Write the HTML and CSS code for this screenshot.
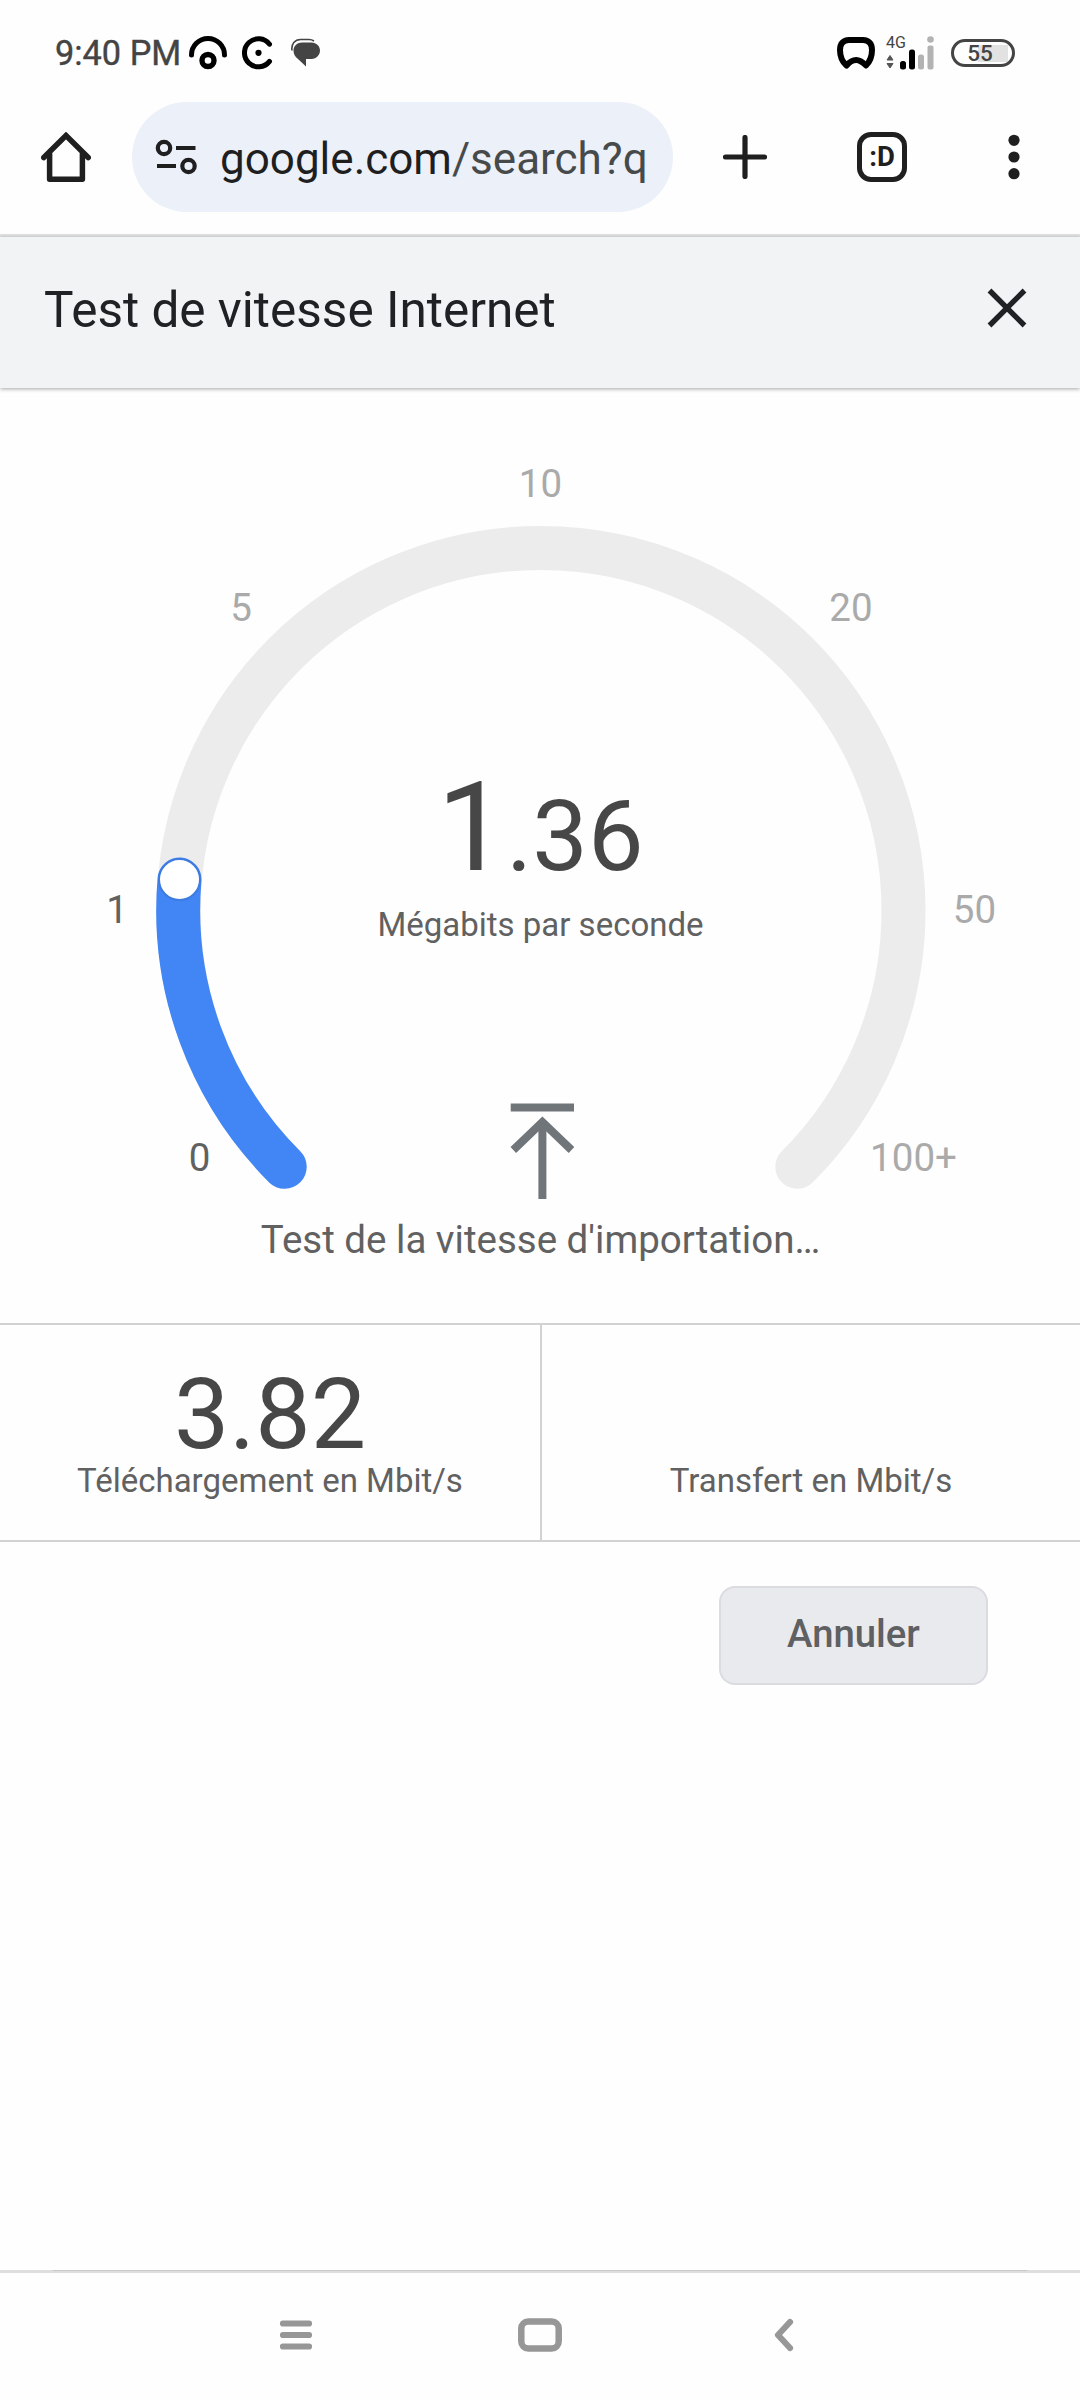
FILE: index.html
```html
<!DOCTYPE html>
<html lang="fr">
<head>
    <meta charset="UTF-8">
    <meta name="viewport" content="width=device-width, initial-scale=1.0">
    <title>Test de vitesse Internet</title>
    <link rel="stylesheet" href="styles.css">
</head>
<body>
    <div class="status-bar">
        <span class="time">9:40 PM</span>
        <svg class="icon-arc" width="40" height="34" viewBox="0 0 40 34">
            <path d="M3.5 19a16.5 16.5 0 0 1 33 0" fill="none" stroke="#000" stroke-width="5" stroke-linecap="round"/>
            <circle cx="20" cy="24.5" r="6" fill="none" stroke="#000" stroke-width="5.4"/>
        </svg>
        <svg class="icon-c" width="32" height="34" viewBox="0 0 32 34">
            <path d="M27.5 8.2a14 14 0 1 0 0 17.2" fill="none" stroke="#000" stroke-width="5" stroke-linecap="round"/>
            <circle cx="16.5" cy="16.8" r="3.1"/>
        </svg>
        <svg class="icon-chat" width="30" height="30" viewBox="0 0 30 30">
            <path d="M1 12.500C0 6 4 1.500 9.500 1.500H18c2 0 3.500.5 5 1.500" fill="none" stroke="#444" stroke-width="1.600"/>
            <path d="M11 4.500h9.500c5 0 8.500 3.700 8.500 8s-3.500 8.500-8.500 8.500H15v7.500L7 21c-3-2-4.500-5-4.500-8.500 0-4.500 4-8 8.500-8z" fill="#444"/>
        </svg>
        <div class="status-right">
            <svg width="40" height="34" viewBox="0 0 40 34">
                <path d="M13 4h14c6 0 9 4 9 10 0 7-2.500 12-6 15.500-3-3-6-5.500-9.800-5.500S13 26.500 10.500 29.500C6.500 26 4 21 4 14 4 8 7 4 13 4z" fill="none" stroke="#000" stroke-width="6" stroke-linejoin="round"/>
            </svg>
            <svg class="signal" width="50" height="44" viewBox="0 -4 50 44">
                <text x="0" y="12.500" font-size="16" fill="#444">4G</text>
                <path d="M4 20.500l3 4.500H1zM4 33l3-4.500H1z" fill="#555" stroke="#555" stroke-linejoin="round"/>
                <rect x="14" y="26" width="6" height="8.500" rx="2.500"/>
                <rect x="23" y="14.500" width="6" height="20" rx="2.500"/>
                <rect x="32" y="19.500" width="6" height="15" rx="2.500" fill="#b3b3b3"/>
                <rect x="41.500" y="10.500" width="6" height="24" rx="2" fill="#b3b3b3"/>
                <circle cx="44.500" cy="4.500" r="3.300" fill="#b3b3b3"/>
            </svg>
            <div class="battery">55</div>
        </div>
    </div>

    <div class="toolbar">
        <svg class="home" width="50" height="50" viewBox="0 0 50 50" fill="none" stroke="#1f1f1f" stroke-width="5.500" stroke-linejoin="round" stroke-linecap="round">
            <path d="M2.800 25.500L25 3.500l22.200 22" stroke-linejoin="miter"/>
            <path d="M8.600 22v25.200h32.800V22"/>
        </svg>
        <div class="url">
            <svg width="44" height="36" viewBox="0 0 44 36" fill="none" stroke="#1f1f1f" stroke-width="4.200">
                <circle cx="9" cy="9" r="6.200"/>
                <path d="M21 9h19.500M2 27h19"/>
                <circle cx="33.500" cy="27" r="6.200"/>
            </svg>
            <span class="address">google.com<span class="path">/search?q</span></span>
        </div>
        <svg class="plus" width="44" height="44" viewBox="0 0 44 44">
            <path d="M2.500 22h39M22 2.500v39" stroke="#1f1f1f" stroke-width="5.200" stroke-linecap="round"/>
        </svg>
        <div class="tabs">:D</div>
        <svg class="dots" width="12" height="46" viewBox="0 0 12 46" fill="#1f1f1f">
            <circle cx="6" cy="6.300" r="5.600"/>
            <circle cx="6" cy="23" r="5.600"/>
            <circle cx="6" cy="39.700" r="5.600"/>
        </svg>
    </div>

    <div class="header">
        <span class="title">Test de vitesse Internet</span>
        <svg width="40" height="40" viewBox="0 0 40 40">
            <path d="M2.500 2.500l35 35M37.500 2.500l-35 35" stroke="#202124" stroke-width="5.400"/>
        </svg>
    </div>

    <div class="gauge">
        <svg width="1080" height="935" viewBox="0 388 1080 935">
            <path class="track" d="M284.700 1166.800A362.500 362.500 0 1 1 797.300 1166.800"/>
            <path class="value" d="M284.700 1166.800A362.500 362.500 0 0 1 179.500 879.500"/>
            <circle cx="179.500" cy="879.500" r="20.500" fill="#fff" stroke="#3d7be0" stroke-width="2"/>

            <g class="ticks">
                <text class="passed" x="199.500" y="1170.500">0</text>
                <text class="passed" x="117" y="923">1</text>
                <text x="241" y="621">5</text>
                <text x="540.500" y="497">10</text>
                <text x="851" y="621">20</text>
                <text x="974.500" y="922.500">50</text>
                <text x="913.500" y="1170.500">100+</text>
            </g>

            <text class="speed" x="437" y="869.800">1<tspan class="decimals" dx="-1">.36</tspan></text>
            <text class="unit" x="540.500" y="936">Mégabits par seconde</text>

            <g fill="none" stroke="#70757a" stroke-width="8">
                <path d="M510.700 1107.500h63.300"/>
                <path d="M542.400 1199v-76"/>
                <path d="M513.300 1150l29.100-28 29.100 28"/>
            </g>

            <text class="state" x="540.500" y="1253">Test de la vitesse d'importation…</text>
        </svg>
    </div>

    <div class="results">
        <div class="result">
            <div class="number">3.82</div>
            <div class="caption">Téléchargement en Mbit/s</div>
        </div>
        <div class="result">
            <div class="number"></div>
            <div class="caption">Transfert en Mbit/s</div>
        </div>
    </div>

    <div class="actions">
        <button class="cancel" type="button">Annuler</button>
    </div>

    <div class="nav-line"></div>
    <div class="nav-bar">
        <svg width="34" height="34" viewBox="0 0 34 34">
            <path d="M4 5.500h26M4 17h26M4 28.500h26" stroke="#979797" stroke-width="6.200" stroke-linecap="round"/>
        </svg>
        <svg class="nav-home" width="44" height="34" viewBox="0 0 44 34">
            <rect x="3.300" y="3.500" width="37.400" height="27" rx="7" fill="none" stroke="#979797" stroke-width="6.500"/>
        </svg>
        <svg class="nav-back" width="20" height="34" viewBox="0 0 20 34">
            <path d="M16 4L4 17l12 13" fill="none" stroke="#979797" stroke-width="6.200" stroke-linecap="round" stroke-linejoin="round"/>
        </svg>
    </div>
</body>
</html>
```
FILE: styles.css
```css
* {
    box-sizing: border-box;
}
body {
    margin: 0;
    width: 1080px;
    height: 2400px;
    display: flex;
    flex-direction: column;
    background-color: #fefefe;
    font-family: Roboto, Arial, sans-serif;
    overflow: hidden;
}
svg {
    display: block;
    flex: none;
}

/* status bar */
.status-bar {
    height: 102px;
    padding: 3px 65px 0 55px;
    display: flex;
    align-items: center;
}
.time {
    width: 133px;
    font-size: 34.3px;
    color: #444;
    white-space: nowrap;
    -webkit-text-stroke: 0.4px #444;
}
.icon-c {
    margin-left: 14px;
}
.icon-chat {
    margin-left: 17px;
}
.status-right {
    margin-left: auto;
    display: flex;
    align-items: center;
}
.signal {
    margin-left: 10px;
}
.battery {
    width: 64px;
    height: 28px;
    margin-left: 15px;
    padding-right: 6px;
    border: 3px solid #444;
    border-radius: 14px;
    background: linear-gradient(#e2e2e2, #e2e2e2) 24px 3px / 30px 17px no-repeat;
    color: #444;
    font-size: 22.5px;
    font-weight: 500;
    line-height: 23px;
    text-align: center;
}

/* browser toolbar */
.toolbar {
    height: 135px;
    padding-left: 41px;
    display: flex;
    align-items: center;
    padding-bottom: 22px;
    border-bottom: 3px solid #e0e3e1;
}
.url {
    width: 541px;
    height: 110px;
    margin-left: 41px;
    padding-left: 23px;
    border-radius: 55px;
    background-color: #ecf0f9;
    display: flex;
    align-items: center;
}
.address {
    margin-left: 21px;
    padding-top: 3px;
    font-size: 44px;
    color: #1f1f1f;
    white-space: nowrap;
}
.path {
    color: #474a4b;
}
.plus {
    margin-left: 50px;
}
.tabs {
    width: 50px;
    height: 50px;
    margin-left: 90px;
    border: 5.5px solid #1f1f1f;
    border-radius: 14px;
    color: #1f1f1f;
    font-size: 27.5px;
    font-weight: 700;
    line-height: 39px;
    text-align: center;
}
.dots {
    margin-left: 101px;
}

/* panel header */
.header {
    height: 151px;
    padding: 0 53px 9px 44px;
    display: flex;
    align-items: center;
    justify-content: space-between;
    background-color: #f1f3f4;
    box-shadow: 0 1px 4px rgba(0, 0, 0, 0.35);
    z-index: 1;
}
.title {
    padding-top: 3px;
    font-size: 49.5px;
    color: #202124;
}

/* gauge */
.gauge {
    height: 935px;
}
.track,
.value {
    fill: none;
    stroke-width: 44;
    stroke-linecap: round;
}
.track {
    stroke: #ececec;
}
.value {
    stroke: #4285f4;
}
.ticks {
    font-size: 38.5px;
    fill: #aaa;
    text-anchor: middle;
}
.passed {
    fill: #616161;
}
.speed {
    font-size: 125px;
    fill: #474747;
}
.decimals {
    font-size: 99px;
}
.unit {
    font-size: 33px;
    fill: #616161;
    text-anchor: middle;
}
.state {
    font-size: 38.5px;
    fill: #616161;
    text-anchor: middle;
}

/* results */
.results {
    height: 219px;
    display: grid;
    grid-template-columns: 542px 1fr;
    border-top: 2px solid #d2d2d2;
    border-bottom: 2px solid #d2d2d2;
}
.result {
    padding-top: 33px;
    text-align: center;
}
.result:first-child {
    border-right: 2px solid #d2d2d2;
}
.number {
    height: 105px;
    font-size: 98.5px;
    line-height: 113px;
    color: #474747;
}
.caption {
    font-size: 33px;
    line-height: 36px;
    color: #616161;
}

/* cancel button */
.actions {
    flex: 1;
    padding: 44px 92px 0 0;
    text-align: right;
}
.cancel {
    width: 269px;
    height: 99px;
    padding: 0 0 4px;
    border: 2px solid #dadce0;
    border-radius: 16px;
    background-color: #e9eaee;
    color: #5f6062;
    font-family: inherit;
    font-size: 38.3px;
    font-weight: 500;
}

/* android navigation */
.nav-line {
    height: 3px;
    background: linear-gradient(#c8c8c8, #c8c8c8) center top / 974px 1px no-repeat #dedede;
}
.nav-bar {
    height: 127px;
    padding: 0 0 3px 279px;
    display: flex;
    align-items: center;
}
.nav-home {
    margin-left: 205px;
}
.nav-back {
    margin-left: 212px;
}
```
